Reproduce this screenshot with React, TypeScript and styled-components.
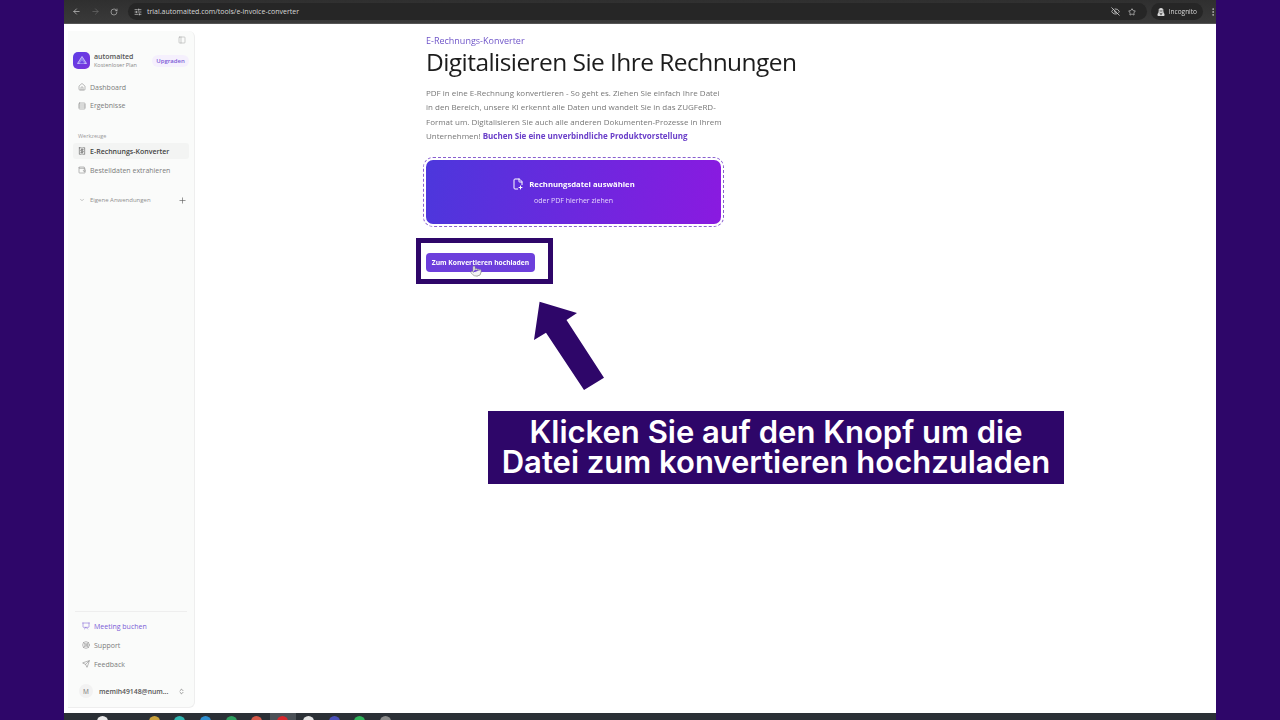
import styled, { createGlobalStyle } from 'styled-components';
import {
  ArrowLeft, ArrowRight, RotateCw, SlidersHorizontal, EyeOff, Star, EllipsisVertical,
  PanelLeft, House, Rows3, Receipt, Wallet, ChevronDown, Plus, Presentation,
  LifeBuoy, Send, ChevronsUpDown, FilePlus2, Pointer,
} from 'lucide-react';
import { FaUserSecret } from 'react-icons/fa';

const GlobalStyle = createGlobalStyle`
  html, body { margin: 0; padding: 0; background: #2e0669; }
  body { font-family: "Open Sans", "Liberation Sans", sans-serif; }
  * { box-sizing: border-box; }
`;

const Page = styled.div`
  width: 1280px;
  height: 720px;
  padding: 0 64px;
  background: #2e0669;
  overflow: hidden;
`;

const Stage = styled.div`
  position: relative;
  width: 1152px;
  height: 720px;
  display: flex;
  flex-direction: column;
  background: #fff;
`;

const ChromeBar = styled.div`
  height: 24px;
  flex: none;
  display: flex;
  align-items: center;
  gap: 10px;
  padding: 0 0 0 8px;
  background: linear-gradient(#2f2f2f, #3a3a3a);
  color: #bdbdbd;
  border-bottom: 1px solid #555;
  filter: blur(0.3px);
`;

const Omnibox = styled.div`
  flex: 1;
  height: 17px;
  display: flex;
  align-items: center;
  gap: 5px;
  padding: 0 11px 0 6px;
  border-radius: 9px;
  background: #262626;
  color: #d8d8d8;
  font-size: 7px;
`;

const Spacer = styled.div`
  flex: 1;
`;

const IncognitoPill = styled.div`
  height: 17px;
  display: flex;
  align-items: center;
  gap: 4px;
  padding: 0 6px;
  border-radius: 9px;
  background: #262626;
  color: #d8d8d8;
  font-size: 6.5px;
  margin-left: -6px;
`;

const MenuDots = styled.div`
  width: 10px;
  margin: 0 -2px 0 -5px;
  display: flex;
`;

const StarGap = styled.span`
  display: flex;
  margin-left: 3px;
`;

const Body = styled.div`
  flex: 1;
  min-height: 0;
  display: flex;
  filter: blur(0.3px);
`;

const Sidebar = styled.aside`
  width: 127px;
  flex: none;
  margin: 7px 0 5px 4px;
  padding: 0 5px 0 5px;
  display: flex;
  flex-direction: column;
  background: #fafbfa;
  border-right: 1px solid #eeeeee;
  border-bottom: 1px solid #eeeeee;
  border-radius: 0 6px 6px 0;
`;

const CollapseRow = styled.div`
  height: 18px;
  display: flex;
  align-items: center;
  justify-content: flex-end;
  padding-right: 3px;
  color: #9a9a9a;
`;

const AccountRow = styled.div`
  margin-top: 1px;
  height: 20px;
  display: flex;
  align-items: center;
  gap: 4px;
`;

const Logo = styled.div`
  width: 17px;
  height: 17px;
  flex: none;
  display: flex;
  align-items: center;
  justify-content: center;
  border-radius: 5px;
  background: linear-gradient(135deg, #5f3ee6, #7b35dc);
`;

const AccountText = styled.div`
  flex: 1;
  min-width: 0;
  padding-top: 2px;
  line-height: 9px;
`;

const AccountName = styled.div`
  font-size: 7px;
  color: #555;
  font-weight: 600;
`;

const AccountPlan = styled.div`
  font-size: 5.5px;
  color: #8a8a8a;
`;

const UpgradeBadge = styled.div`
  width: 37px;
  height: 12px;
  margin-top: 1px;
  flex: none;
  display: flex;
  align-items: center;
  justify-content: center;
  border-radius: 6px;
  background: #f5f0fd;
  color: #7a5bd6;
  font-size: 6px;
  font-weight: 600;
`;

const NavList = styled.nav<{ $top: number; $gap?: number }>`
  margin-top: ${(p) => p.$top}px;
  display: flex;
  flex-direction: column;
  gap: ${(p) => p.$gap ?? 3}px;
`;

const NavItem = styled.div<{ $active?: boolean; $accent?: boolean }>`
  height: 16px;
  display: flex;
  align-items: center;
  gap: 4px;
  padding-left: 5px;
  border-radius: 3px;
  font-size: 7px;
  background: ${(p) => (p.$active ? '#f3f4f3' : 'transparent')};
  color: ${(p) => (p.$active ? '#444' : p.$accent ? '#7a5bd6' : '#7c7c7c')};
  font-weight: ${(p) => (p.$active ? 600 : 400)};
`;

const SectionLabel = styled.div`
  margin-top: 16.5px;
  padding-left: 5px;
  height: 12px;
  line-height: 12px;
  font-size: 5.5px;
  color: #9a9a9a;
`;

const GroupRow = styled.div`
  margin-top: 16px;
  height: 12px;
  display: flex;
  align-items: center;
  gap: 5px;
  padding: 0 2px 0 6px;
  font-size: 6px;
  color: #8f8f8f;
`;

const FooterBlock = styled.div`
  margin-top: auto;
`;

const FooterList = styled(NavList)`
  padding: 6px 0 0 2px;
  margin: 0 2px;
  border-top: 1px solid #eeeeee;
`;

const UserRow = styled.div`
  margin: 10px 0 7px 6px;
  height: 18px;
  display: flex;
  align-items: center;
  gap: 6px;
  padding-right: 4px;
  color: #555;
  font-size: 6.8px;
  font-weight: 600;
`;

const Avatar = styled.div`
  width: 14px;
  height: 14px;
  flex: none;
  display: flex;
  align-items: center;
  justify-content: center;
  border-radius: 7px;
  background: #f2f2f2;
  color: #777;
  font-weight: 400;
  font-size: 6.5px;
`;

const UserMail = styled.div`
  flex: 1;
`;

const Main = styled.main`
  flex: 1;
  padding: 11px 0 0 231px;
`;

const Eyebrow = styled.div`
  height: 12px;
  line-height: 12px;
  font-size: 9px;
  color: #6f55c9;
`;

const Title = styled.h1`
  margin: 0;
  height: 29px;
  line-height: 29px;
  font-size: 24.5px;
  font-weight: 500;
  letter-spacing: -0.56px;
  color: #1c1c1c;
  white-space: nowrap;
`;

const Intro = styled.p`
  margin: 9.5px 0 0;
  width: 300px;
  font-size: 8px;
  line-height: 14.6px;
  color: #777;
  white-space: nowrap;
`;

const IntroLink = styled.b`
  color: #6a3fc9;
  font-weight: 700;
`;

const DropZone = styled.div`
  margin: 16.5px 0 0;
  width: 295px;
  height: 64px;
  padding-bottom: 2px;
  display: flex;
  flex-direction: column;
  align-items: center;
  justify-content: center;
  gap: 6px;
  border-radius: 7px;
  background: linear-gradient(100deg, #4c37dc, #8a1ae0);
  outline: 1.5px dashed #8a5fd0;
  outline-offset: 2px;
  color: #fff;
`;

const DropTitle = styled.div`
  display: flex;
  align-items: center;
  gap: 5px;
  font-size: 7.7px;
  font-weight: 700;
`;

const DropHint = styled.div`
  font-size: 7px;
  color: #e3d4fb;
`;

const UploadButton = styled.button`
  margin: 29px 0 0;
  width: 109px;
  height: 19px;
  display: block;
  padding: 0;
  border: 0;
  border-radius: 4px;
  background: #6d3fdc;
  color: #fff;
  font-family: inherit;
  font-size: 6.7px;
  font-weight: 700;
`;

const HandCursor = styled.div`
  position: absolute;
  left: 406px;
  top: 265px;
  color: #8a8a8a;
  display: flex;
`;

const Highlight = styled.div`
  position: absolute;
  left: 352px;
  top: 238px;
  width: 137px;
  height: 46px;
  border: 5px solid #2e0669;
`;

const ArrowMark = styled.svg`
  position: absolute;
  left: 460px;
  top: 292px;
`;

const Caption = styled.div`
  position: absolute;
  left: 424px;
  top: 411px;
  width: 576px;
  height: 73px;
  padding-top: 6px;
  background: #2e0669;
  color: #fff;
  font-family: Inter, "Liberation Sans", sans-serif;
  font-size: 31px;
  font-weight: 600;
  line-height: 30px;
  text-align: center;
  white-space: nowrap;
`;

const Taskbar = styled.div`
  height: 7px;
  flex: none;
  display: flex;
  padding-left: 26px;
  background: #2b3036;
  overflow: hidden;
`;

const TaskSlot = styled.div<{ $active?: boolean }>`
  width: 25.7px;
  flex: none;
  display: flex;
  justify-content: center;
  padding-top: 3px;
  background: ${(p) => (p.$active ? '#4c5157' : 'transparent')};
`;

const TaskIcon = styled.div<{ $color: string }>`
  width: 11px;
  height: 11px;
  flex: none;
  border-radius: 50%;
  background: ${(p) => p.$color};
`;

const nav = { size: 8, strokeWidth: 1.6 };

const taskColors = ['#e8e8e8', '', '#c9a13c', '#2fb5b0', '#2f8fd0', '#2f9e5f', '#d65a4a', '#d8262c', '#e4e4e4', '#4a50b8', '#2fb35a', '#8a8a8a'];

export default function App() {
  return (
    <Page>
      <GlobalStyle />
      <Stage>
        <ChromeBar>
          <ArrowLeft size={9} />
          <ArrowRight size={9} color="#666" />
          <RotateCw size={8} />
          <Omnibox>
            <SlidersHorizontal size={8} />
            <span>trial.automaited.com/tools/e-invoice-converter</span>
            <Spacer />
            <EyeOff size={9} />
            <StarGap><Star size={8} /></StarGap>
          </Omnibox>
          <IncognitoPill>
            <FaUserSecret size={8} />
            <span>Incognito</span>
          </IncognitoPill>
          <MenuDots>
            <EllipsisVertical size={10} />
          </MenuDots>
        </ChromeBar>
        <Body>
          <Sidebar>
            <CollapseRow>
              <PanelLeft size={8} strokeWidth={1.4} />
            </CollapseRow>
            <AccountRow>
              <Logo>
                <svg width="12" height="12" viewBox="0 0 12 12">
                  <path d="M1.5 9.5 L6 2.5 L10.5 9.5 Z" fill="#8f7cf0" stroke="#c4baf8" strokeWidth="1" strokeLinejoin="round" />
                  <path d="M3.5 9.5 L6 6.5 L8.5 9.5 Z" fill="#6a44e4" />
                </svg>
              </Logo>
              <AccountText>
                <AccountName>automaited</AccountName>
                <AccountPlan>Kostenloser Plan</AccountPlan>
              </AccountText>
              <UpgradeBadge>Upgraden</UpgradeBadge>
            </AccountRow>
            <NavList $top={9} $gap={2.5}>
              <NavItem><House {...nav} />Dashboard</NavItem>
              <NavItem><Rows3 {...nav} />Ergebnisse</NavItem>
            </NavList>
            <SectionLabel>Werkzeuge</SectionLabel>
            <NavList $top={1}>
              <NavItem $active><Receipt {...nav} />E-Rechnungs-Konverter</NavItem>
              <NavItem><Wallet {...nav} />Bestelldaten extrahieren</NavItem>
            </NavList>
            <GroupRow>
              <ChevronDown size={6} />
              <span>Eigene Anwendungen</span>
              <Spacer />
              <Plus size={9} strokeWidth={1.6} color="#555" />
            </GroupRow>
            <FooterBlock>
              <FooterList $top={0}>
                <NavItem $accent><Presentation {...nav} />Meeting buchen</NavItem>
                <NavItem><LifeBuoy {...nav} />Support</NavItem>
                <NavItem><Send {...nav} />Feedback</NavItem>
              </FooterList>
              <UserRow>
                <Avatar>M</Avatar>
                <UserMail>memih49148@num...</UserMail>
                <ChevronsUpDown size={7} />
              </UserRow>
            </FooterBlock>
          </Sidebar>
          <Main>
            <Eyebrow>E-Rechnungs-Konverter</Eyebrow>
            <Title>Digitalisieren Sie Ihre Rechnungen</Title>
            <Intro>
              PDF in eine E-Rechnung konvertieren - So geht es. Ziehen Sie einfach Ihre Datei<br />
              in den Bereich, unsere KI erkennt alle Daten und wandelt Sie in das ZUGFeRD-<br />
              Format um. Digitalisieren Sie auch alle anderen Dokumenten-Prozesse in Ihrem<br />
              Unternehmen! <IntroLink>Buchen Sie eine unverbindliche Produktvorstellung</IntroLink>
            </Intro>
            <DropZone>
              <DropTitle><FilePlus2 size={12} />Rechnungsdatei auswählen</DropTitle>
              <DropHint>oder PDF hierher ziehen</DropHint>
            </DropZone>
            <UploadButton>Zum Konvertieren hochladen</UploadButton>
          </Main>
        </Body>
        <Taskbar>
          {taskColors.map((color, i) => (
            <TaskSlot key={i} $active={i === 7}>
              {color && <TaskIcon $color={color} />}
            </TaskSlot>
          ))}
        </Taskbar>
        <Highlight />
        <HandCursor><Pointer size={12} strokeWidth={1.3} fill="#f2f2f2" /></HandCursor>
        <ArrowMark width="90" height="110" viewBox="524 292 90 110">
          <polygon points="539.6,301.7 577,313 566.5,320 604,377.7 584,390 546,332.7 534,340" fill="#2e0669" />
        </ArrowMark>
        <Caption>
          Klicken Sie auf den Knopf um die<br />
          Datei zum konvertieren hochzuladen
        </Caption>
      </Stage>
    </Page>
  );
}
